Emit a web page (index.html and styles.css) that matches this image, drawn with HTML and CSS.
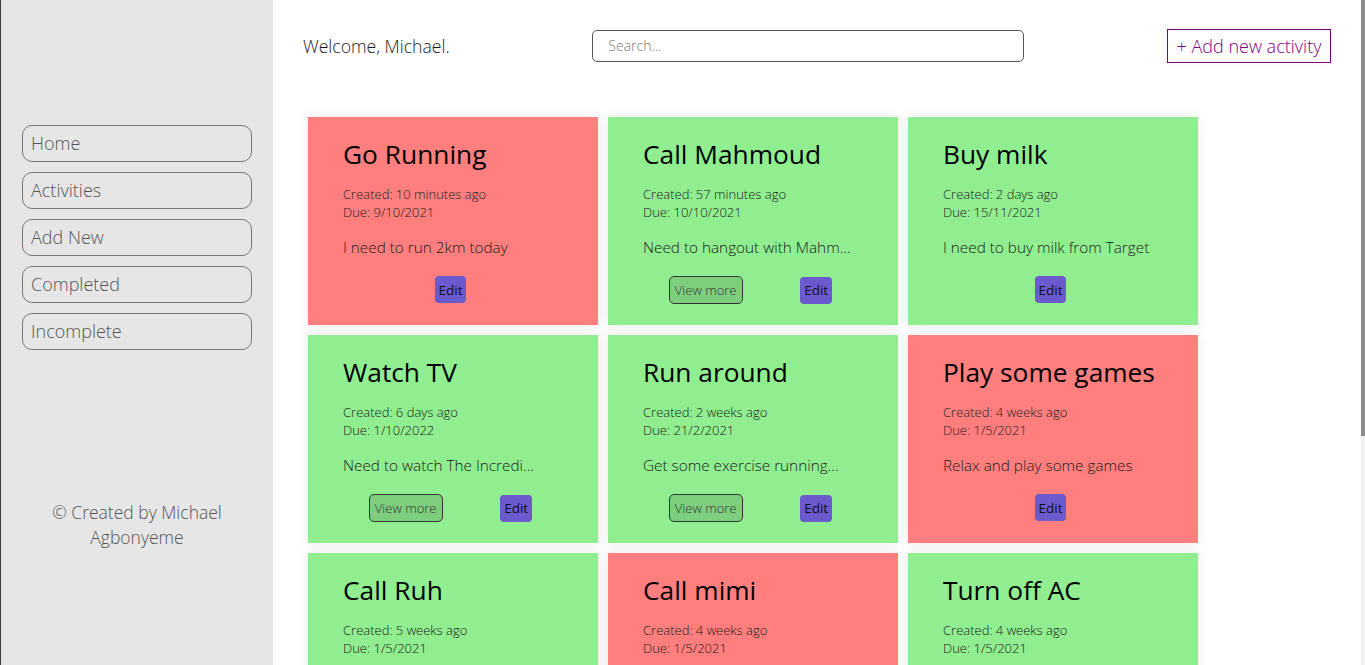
FILE: index.html
```html
<!DOCTYPE html>
<html lang="en">
<head>
<meta charset="utf-8">
<title>Activities</title>
<link rel="stylesheet" href="styles.css">
</head>
<body>
<div class="app">
  <aside class="sidebar">
    <nav class="nav">
      <a class="nav-item" href="#">Home</a>
      <a class="nav-item" href="#">Activities</a>
      <a class="nav-item" href="#">Add New</a>
      <a class="nav-item" href="#">Completed</a>
      <a class="nav-item" href="#">Incomplete</a>
    </nav>
    <p class="credit">© Created by Michael<br>Agbonyeme</p>
  </aside>
  <main class="main">
    <header class="topbar">
      <span class="welcome">Welcome, Michael.</span>
      <input class="search" type="text" placeholder="Search...">
      <button class="add-btn">+ Add new activity</button>
    </header>
    <section class="grid">
      <article class="card card--late">
        <h2 class="card-title">Go Running</h2>
        <p class="card-meta">Created: 10 minutes ago<br>Due: 9/10/2021</p>
        <p class="card-desc">I need to run 2km today</p>
        <div class="card-actions"><button class="btn-edit">Edit</button></div>
      </article>
      <article class="card card--ok">
        <h2 class="card-title">Call Mahmoud</h2>
        <p class="card-meta">Created: 57 minutes ago<br>Due: 10/10/2021</p>
        <p class="card-desc">Need to hangout with Mahm...</p>
        <div class="card-actions"><button class="btn-more">View more</button><button class="btn-edit">Edit</button></div>
      </article>
      <article class="card card--ok">
        <h2 class="card-title">Buy milk</h2>
        <p class="card-meta">Created: 2 days ago<br>Due: 15/11/2021</p>
        <p class="card-desc">I need to buy milk from Target</p>
        <div class="card-actions"><button class="btn-edit">Edit</button></div>
      </article>
      <article class="card card--ok">
        <h2 class="card-title">Watch TV</h2>
        <p class="card-meta">Created: 6 days ago<br>Due: 1/10/2022</p>
        <p class="card-desc">Need to watch The Incredi...</p>
        <div class="card-actions"><button class="btn-more">View more</button><button class="btn-edit">Edit</button></div>
      </article>
      <article class="card card--ok">
        <h2 class="card-title">Run around</h2>
        <p class="card-meta">Created: 2 weeks ago<br>Due: 21/2/2021</p>
        <p class="card-desc">Get some exercise running...</p>
        <div class="card-actions"><button class="btn-more">View more</button><button class="btn-edit">Edit</button></div>
      </article>
      <article class="card card--late">
        <h2 class="card-title">Play some games</h2>
        <p class="card-meta">Created: 4 weeks ago<br>Due: 1/5/2021</p>
        <p class="card-desc">Relax and play some games</p>
        <div class="card-actions"><button class="btn-edit">Edit</button></div>
      </article>
      <article class="card card--ok">
        <h2 class="card-title">Call Ruh</h2>
        <p class="card-meta">Created: 5 weeks ago<br>Due: 1/5/2021</p>
        <p class="card-desc">Call Ruh today</p>
        <div class="card-actions"><button class="btn-edit">Edit</button></div>
      </article>
      <article class="card card--late">
        <h2 class="card-title">Call mimi</h2>
        <p class="card-meta">Created: 4 weeks ago<br>Due: 1/5/2021</p>
        <p class="card-desc">Call mimi today</p>
        <div class="card-actions"><button class="btn-edit">Edit</button></div>
      </article>
      <article class="card card--ok">
        <h2 class="card-title">Turn off AC</h2>
        <p class="card-meta">Created: 4 weeks ago<br>Due: 1/5/2021</p>
        <p class="card-desc">Turn off the AC</p>
        <div class="card-actions"><button class="btn-edit">Edit</button></div>
      </article>
      <article class="card card--ok">
        <h2 class="card-title">Read a book</h2>
        <p class="card-meta">Created: 5 weeks ago<br>Due: 1/5/2021</p>
        <p class="card-desc">Read a chapter</p>
        <div class="card-actions"><button class="btn-edit">Edit</button></div>
      </article>
    </section>
  </main>
</div>
<div class="scrollbar"><div class="scrollbar-thumb"></div></div>
</body>
</html>
```

FILE: styles.css
```css
html, body {
  margin: 0;
  padding: 0;
}

body {
  font-family: "Open Sans", "Liberation Sans", sans-serif;
  background: #ffffff;
  color: #222;
}

.scrollbar {
  position: fixed;
  top: 0;
  right: 0;
  width: 4px;
  height: 100vh;
  background: #f1f1f1;
}
.scrollbar-thumb {
  height: 436px;
  background: #8c8c8c;
}

.app {
  display: grid;
  grid-template-columns: 273px 1fr;
  align-items: start;
}

.sidebar {
  position: sticky;
  top: 0;
  height: 100vh;
  box-sizing: border-box;
  background: #e6e6e6;
  border-left: 1px solid #3a3a3a;
  padding: 125px 21px 0 21px;
  display: flex;
  flex-direction: column;
}

.nav {
  display: flex;
  flex-direction: column;
  gap: 10px;
}

.nav-item {
  display: flex;
  align-items: center;
  height: 37px;
  box-sizing: border-box;
  border: 1px solid #777;
  border-radius: 10px;
  padding: 0 8px 2px;
  color: #555;
  font-size: 18px;
  font-weight: 300;
  text-decoration: none;
}

.credit {
  margin: 150px 0 0;
  text-align: center;
  color: #555;
  font-size: 17.5px;
  font-weight: 300;
  line-height: 25px;
}

.main {
  min-height: 1014px;
  box-sizing: border-box;
  padding: 29px 34px 35px 30px;
}

.topbar {
  display: flex;
  align-items: center;
  justify-content: space-between;
  height: 34px;
}

.welcome {
  font-size: 17.6px;
  font-weight: 300;
  color: #1a1a1a;
}

.search {
  width: 432px;
  height: 32px;
  box-sizing: border-box;
  border: 1px solid #555;
  border-radius: 5px;
  padding: 0 15px 2px;
  font-family: inherit;
  font-size: 14px;
  font-weight: 300;
  outline: none;
}
.search::placeholder {
  color: #777;
}

.add-btn {
  width: 164px;
  height: 34px;
  box-sizing: border-box;
  background: #fff;
  border: 1px solid #800080;
  color: #800080;
  font-family: inherit;
  font-size: 18px;
  font-weight: 300;
  padding: 0;
  box-shadow: 0 0 8px rgba(0, 0, 0, 0.04);
}

.grid {
  margin: 54px 0 0 5px;
  display: grid;
  grid-template-columns: repeat(3, 290px);
  gap: 10px;
}

.card {
  height: 208px;
  box-sizing: border-box;
  padding: 20px 35px 0;
  box-shadow: 0 0 12px rgba(0, 0, 0, 0.09);
}
.card--late {
  background: #ff7f7f;
}
.card--ok {
  background: #90ee90;
}

.card-title {
  margin: 0;
  font-size: 26.3px;
  font-weight: 400;
  line-height: 34px;
  color: #000;
  white-space: nowrap;
}

.card-meta {
  margin: 14px 0 0;
  font-size: 13px;
  font-weight: 300;
  line-height: 18px;
  color: #1a1a1a;
}

.card-desc {
  margin: 16px 0 0;
  font-size: 15.3px;
  font-weight: 300;
  line-height: 20px;
  color: #1a1a1a;
}

.card-actions {
  margin: 19px 2px 0 -3px;
  display: flex;
  justify-content: space-around;
  align-items: center;
}

.btn-edit {
  height: 27px;
  box-sizing: border-box;
  padding: 0 4px;
  border: none;
  border-radius: 4px;
  background: #6a5acd;
  color: #111;
  font-family: inherit;
  font-size: 13.5px;
}

.btn-more {
  height: 28px;
  box-sizing: border-box;
  padding: 0 5px;
  border: 1px solid #333;
  border-radius: 5px;
  background: rgba(0, 0, 0, 0.13);
  color: #333;
  font-family: inherit;
  font-size: 13px;
  font-weight: 300;
}
```
